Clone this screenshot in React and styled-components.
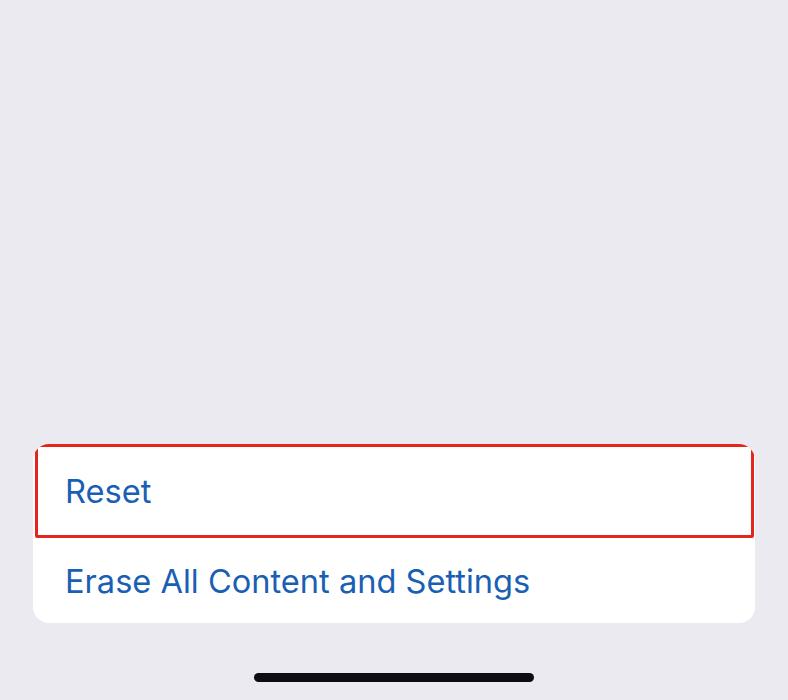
import React from "react";
import styled, { createGlobalStyle } from "styled-components";

const GlobalStyle = createGlobalStyle`
  html, body {
    margin: 0;
    padding: 0;
    background: #ebeaf0;
  }
`;

const Screen = styled.div`
  width: 788px;
  height: 700px;
  display: flex;
  flex-direction: column;
  justify-content: flex-end;
  align-items: center;
  background: #ebeaf0;
  font-family: "Inter", "Roboto", sans-serif;
`;

const Card = styled.div`
  width: 722px;
  background: #ffffff;
  border-radius: 16px;
  overflow: hidden;
  display: flex;
  flex-direction: column;
`;

const Row = styled.div`
  height: ${(p) => p.h}px;
  box-sizing: border-box;
  display: flex;
  align-items: center;
  padding-left: 32px;
  color: #1a5fb4;
  font-size: 32.6px;
  ${(p) => p.highlight && `
    border: 3px solid #e3251b;
    border-radius: 2px;
    margin: 0 1px 0 2px;
    padding-left: 27px;
  `}
`;

const HomeBar = styled.div`
  width: 280px;
  height: 9px;
  border-radius: 5px;
  background: #0d0c14;
  margin: 50px 0 18px;
`;

export default function App() {
  return (
    <Screen>
      <GlobalStyle />
      <Card>
        <Row h={94} highlight>Reset</Row>
        <Row h={85}>Erase All Content and Settings</Row>
      </Card>
      <HomeBar />
    </Screen>
  );
}
